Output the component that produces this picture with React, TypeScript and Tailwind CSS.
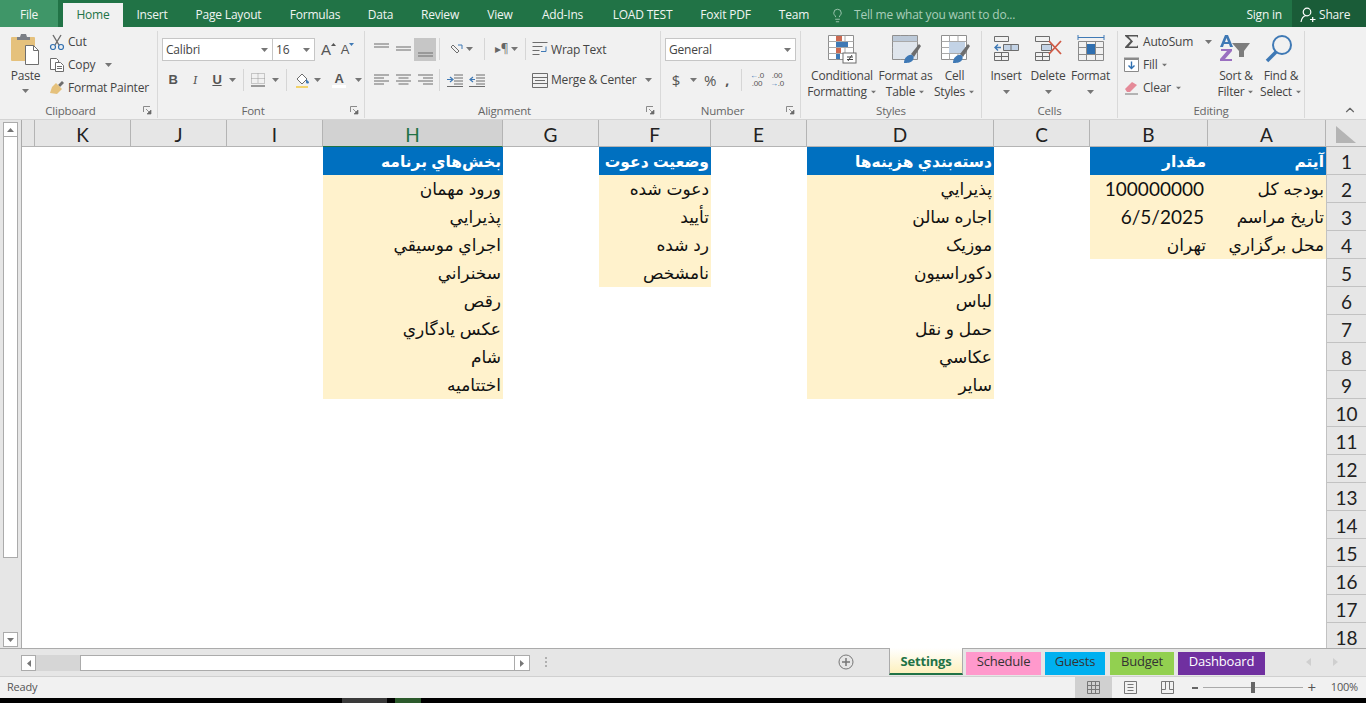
import type { ReactNode } from "react";
import { ChevronUp, Lightbulb } from "lucide-react";

const tabs = [
  { label: "Insert", w: "w-[58px]" },
  { label: "Page Layout", w: "w-[95px]" },
  { label: "Formulas", w: "w-[78px]" },
  { label: "Data", w: "w-[53px]" },
  { label: "Review", w: "w-[66px]" },
  { label: "View", w: "w-[54px]" },
  { label: "Add-Ins", w: "w-[71px]" },
  { label: "LOAD TEST", w: "w-[89px]" },
  { label: "Foxit PDF", w: "w-[77px]" },
  { label: "Team", w: "w-[60px]" },
];

const columns = ["", "K", "J", "I", "H", "G", "F", "E", "D", "C", "B", "A"];

// sheet content, keyed by column letter
const sheet: Record<string, string[]> = {
  H: ["بخش‌هاي برنامه", "ورود مهمان", "پذيرايي", "اجراي موسيقي", "سخنراني", "رقص", "عكس يادگاري", "شام", "اختتاميه"],
  F: ["وضعيت دعوت", "دعوت شده", "تأييد", "رد شده", "نامشخص"],
  D: ["دسته‌بندي هزينه‌ها", "پذيرايي", "اجاره سالن", "موزيک", "دكوراسيون", "لباس", "حمل و نقل", "عكاسي", "ساير"],
  B: ["مقدار", "100000000", "6/5/2025", "تهران"],
  A: ["آيتم", "بودجه كل", "تاريخ مراسم", "محل برگزاري"],
};

const rows = Array.from({ length: 18 }, (_, i) => i);

const Caret = ({ className = "" }: { className?: string }) => (
  <svg width="7" height="4" viewBox="0 0 7 4" className={`shrink-0 ${className}`}>
    <path d="M0 0h7L3.5 4z" fill="#767676" />
  </svg>
);

const Launcher = () => (
  <svg width="9" height="9" viewBox="0 0 9 9" className="shrink-0">
    <path d="M.5 6V.5H7" fill="none" stroke="#8a8a8a" />
    <path d="M3 3l4 4M8 4v4H4z" stroke="#6a6a6a" fill="#6a6a6a" strokeWidth=".7" />
  </svg>
);

const Sep = ({ className = "" }: { className?: string }) => <div className={`w-px h-[22px] bg-[#d6d6d6] ${className}`} />;

// horizontal text lines used by the alignment buttons
const Lines = ({ widths, align = "start" }: { widths: number[]; align?: "start" | "center" | "end" }) => (
  <svg width="15" height={widths.length * 3} viewBox={`0 0 15 ${widths.length * 3}`}>
    {widths.map((w, i) => (
      <rect
        key={i}
        x={align === "start" ? 0 : align === "center" ? (15 - w) / 2 : 15 - w}
        y={i * 3 + 0.5}
        width={w}
        height="1"
        fill="#6d6d6d"
      />
    ))}
  </svg>
);

function Group({ label, width, children, launcher = false }: { label: string; width: string; children: ReactNode; launcher?: boolean }) {
  return (
    <div className={`${width} shrink-0 h-full flex flex-col border-r border-[#d9d9d9]`}>
      <div className="flex-1 min-h-0">{children}</div>
      <div className={`h-[15px] flex items-center text-[11.5px] leading-none text-[#666] relative justify-center ${launcher ? "pr-[16px]" : ""}`}>
        {label}
        {launcher && (
          <span className="absolute right-[5px] top-[3px]">
            <Launcher />
          </span>
        )}
      </div>
    </div>
  );
}

function BigButton({ lines, icon, width, caretAlone = false }: { lines: string[]; icon: ReactNode; width: string; caretAlone?: boolean }) {
  return (
    <div className={`${width} shrink-0 flex flex-col items-center text-[12px] leading-[16px] text-[#444]`}>
      <div className="h-[37px] flex items-start pt-[3px]">{icon}</div>
      {lines.map((l, i) => (
        <div key={i} className="whitespace-nowrap flex items-center gap-[3px]">
          {l}
          {i === lines.length - 1 && !caretAlone && <Caret className="scale-75" />}
        </div>
      ))}
      {caretAlone && (
        <div className="h-[16px] flex items-center">
          <Caret />
        </div>
      )}
    </div>
  );
}

const MiniGrid = ({ children }: { children?: ReactNode }) => (
  <svg width="30" height="30" viewBox="0 0 30 30">
    <path d="M1.500 1.500h25v24h-25z" fill="#fff" stroke="#8f8f8f" />
    <path d="M1.500 7.500h25M1.500 13.500h25M1.500 19.500h25M9.500 1.500v24M18 1.500v24" stroke="#a9a9a9" fill="none" />
    {children}
  </svg>
);

const Brush = () => (
  <g>
    <path d="M20 20l8-10 2 2-7 11z" fill="#6d6d6d" />
    <path d="M13 29c0-5 4-9 8-8 2 .6 2 3 1 5-2 3-6 3-9 3z" fill="#3f79b5" />
  </g>
);

function Cell({ col, row }: { col: string; row: number }) {
  const value = sheet[col]?.[row];
  if (value === undefined) return <div className="h-[28px] bg-white" />;
  const header = row === 0;
  const isNumber = /^[0-9]/.test(value);
  return (
    <div
      dir="rtl"
      className={`h-[28px] flex items-center justify-start whitespace-nowrap overflow-hidden ${
        header ? "bg-[#0070c0] text-white font-bold" : "bg-[#fff2cc] text-[#111]"
      } ${
        isNumber
          ? "font-['Lato',sans-serif] text-[19px] pr-[4px] pt-[1px]"
          : `font-['Liberation_Sans','DejaVu_Sans',sans-serif] pr-[2px] pt-[1px] ${header ? "text-[15.5px]" : "text-[17px]"}`
      }`}
    >
      {isNumber ? <span dir="ltr">{value}</span> : value}
    </div>
  );
}

export default function App() {
  return (
    <div className="w-[1366px] h-screen overflow-hidden flex flex-col bg-black font-['Open_Sans',sans-serif] tracking-[-0.2px]">
      {/* Tab strip */}
      <div className="h-[27px] shrink-0 flex items-stretch bg-[#217346] text-[12px] text-[#f0f5f2]">
        <div className="w-[58px] flex items-center justify-center bg-[#3f9668] pt-[3px]">File</div>
        <div className="w-[5px]" />
        <div className="w-[60px] mt-[3px] flex items-center justify-center bg-[#f1f1f1] text-[#217346]">Home</div>
        <div className="flex items-center pt-[3px]">
          {tabs.map((t) => (
            <div key={t.label} className={`${t.w} text-center whitespace-nowrap`}>
              {t.label}
            </div>
          ))}
        </div>
        <div className="flex items-center ml-[6px] pt-[3px] text-[#a9ceb9]">
          <Lightbulb size={15} strokeWidth={1.4} />
          <span className="ml-[9px]">Tell me what you want to do...</span>
        </div>
        <div className="flex-1" />
        <div className="flex items-center mr-[10px] pt-[3px]">Sign in</div>
        <div className="w-[74px] flex items-center bg-[#1a5c38] pl-[8px] pt-[3px] gap-[3px]">
          <svg width="16" height="16" viewBox="0 0 16 16" fill="none" stroke="#fff" strokeWidth="1.2">
            <circle cx="7" cy="5" r="3.8" />
            <path d="M1 15c.5-3.500 2.500-6 5-6.500M10 12.500h5.500M12.700 10v5" />
          </svg>
          Share
        </div>
      </div>

      {/* Ribbon */}
      <div className="h-[92px] shrink-0 bg-[#f1f1f1] flex pt-[4px] pb-[1px] relative text-[#444]">
        <Group label="Clipboard" width="w-[158px]" launcher>
          <div className="flex h-full">
            <div className="w-[49px] flex flex-col items-center pl-[2px] text-[12px] leading-[16px]">
              <svg width="32" height="33" viewBox="0 0 32 33" className="mt-[2px]">
                <rect x="1" y="4" width="24" height="24" rx="1" fill="#e5c17c" />
                <path d="M7 4h3l1-3h5l1 3h3v3H7z" fill="#7b7f86" />
                <path d="M15.500 12.500h8l5 5v14h-13z" fill="#fff" stroke="#6e6e6e" />
                <path d="M23.500 12.500v5h5" fill="none" stroke="#6e6e6e" />
              </svg>
              <div className="mt-[2px]">Paste</div>
              <Caret className="mt-[5px]" />
            </div>
            <div className="flex flex-col text-[12px] -mt-[1px]">
              <div className="h-[23px] flex items-center gap-[3px]">
                <svg width="16" height="16" viewBox="0 0 16 16" fill="none">
                  <path d="M4 1l6 10M12 1L6 11" stroke="#6d6d6d" strokeWidth="1.4" />
                  <circle cx="4" cy="13" r="2.500" stroke="#2f6fb0" strokeWidth="1.2" />
                  <circle cx="12" cy="13" r="2.500" stroke="#2f6fb0" strokeWidth="1.2" />
                </svg>
                Cut
              </div>
              <div className="h-[23px] flex items-center gap-[3px]">
                <svg width="16" height="16" viewBox="0 0 16 16" fill="#fff" stroke="#6d6d6d">
                  <path d="M1.500 1.500h6l2 2v9h-8z" />
                  <path d="M6.500 5.500h5l3 3v6h-8z" />
                  <path d="M8 9.500h5M8 11.500h5" />
                </svg>
                Copy
                <Caret className="ml-[7px]" />
              </div>
              <div className="h-[23px] flex items-center gap-[3px]">
                <svg width="16" height="16" viewBox="0 0 16 16">
                  <path d="M9 5l4-4 2 2-4 4z" fill="#6d6d6d" />
                  <path d="M7 3l6 6-5 5-7-1 2-6z" fill="#e5c17c" />
                </svg>
                Format Painter
              </div>
            </div>
          </div>
        </Group>

        <Group label="Font" width="w-[207px]" launcher>
          <div className="pl-[4px] pt-[7px]">
            <div className="flex items-center">
              <div className="w-[111px] h-[23px] bg-white border border-[#c6c6c6] flex items-center justify-between px-[3px] text-[12px]">
                Calibri
                <Caret className="mr-[1px]" />
              </div>
              <div className="w-[43px] h-[23px] -ml-px bg-white border border-[#c6c6c6] flex items-center justify-between px-[3px] text-[12px]">
                16
                <Caret className="mr-[1px]" />
              </div>
              <span className="ml-[6px] text-[15px] leading-none font-['Liberation_Sans',sans-serif] text-[#555]">A</span>
              <svg width="5" height="3" viewBox="0 0 5 3" className="mb-[10px]">
                <path d="M2.500 0L5 3H0z" fill="#555" />
              </svg>
              <span className="ml-[5px] text-[13px] leading-none font-['Liberation_Sans',sans-serif] text-[#555]">A</span>
              <svg width="5" height="3" viewBox="0 0 5 3" className="mb-[10px]">
                <path d="M0 0h5L2.500 3z" fill="#3f79b5" />
              </svg>
            </div>
            <div className="flex items-center mt-[8px] h-[22px] text-[13px] font-['Liberation_Sans',sans-serif] text-[#555]">
              <span className="w-[22px] text-center font-bold">B</span>
              <span className="w-[22px] text-center italic font-serif">I</span>
              <span className="w-[22px] text-center font-bold underline">U</span>
              <Caret className="ml-[1px]" />
              <Sep className="ml-[7px]" />
              <svg width="14" height="14" viewBox="0 0 14 14" className="ml-[7px]">
                <path d="M.5.500h13v10H.5zM.5 5.500h13M7 .5v10" fill="none" stroke="#9a9a9a" strokeDasharray="1 1" />
                <path d="M0 13h14" stroke="#7d7d7d" strokeWidth="1.500" />
              </svg>
              <Caret className="ml-[7px]" />
              <Sep className="ml-[7px]" />
              <svg width="16" height="16" viewBox="0 0 16 16" className="ml-[8px]">
                <path d="M2 7l5-5 5 5-5 5z" fill="#fff" stroke="#6d6d6d" />
                <path d="M11 7l3 3c0 2-3 2-3 0z" fill="#3f79b5" />
                <path d="M1 15h12" stroke="#f2d36b" strokeWidth="2" />
              </svg>
              <Caret className="ml-[3px]" />
              <span className="ml-[11px] w-[14px] text-center font-bold leading-none border-b-[3px] border-white">A</span>
              <Caret className="ml-[9px]" />
            </div>
          </div>
        </Group>

        <Group label="Alignment" width="w-[296px]" launcher>
          <div className="pl-[5px] pt-[6px]">
            <div className="flex items-center h-[24px]">
              <div className="w-[22px] flex justify-center -mt-[7px]">
                <Lines widths={[15, 15]} />
              </div>
              <div className="w-[22px] flex justify-center">
                <Lines widths={[15, 15]} />
              </div>
              <div className="w-[22px] h-[23px] bg-[#c6c6c6] flex justify-center items-end pb-[3px]">
                <Lines widths={[15, 15]} />
              </div>
              <Sep className="ml-[3px]" />
              <svg width="15" height="15" viewBox="0 0 15 15" className="ml-[9px]" fill="none" stroke="#6d6d6d">
                <path d="M2 5l6 6M4 3l6 6M2 5l2-2M8 11l2-2" />
                <path d="M9 3l4 0 0 4" stroke="#3f79b5" />
              </svg>
              <Caret className="ml-[2px]" />
              <Sep className="ml-[11px]" />
              <span className="ml-[10px] w-[13px] text-[12px] leading-none text-[#666]">▸¶</span>
              <Caret className="ml-[3px]" />
              <Sep className="ml-[7px]" />
              <div className="ml-[6px] mt-[1px] flex items-center gap-[3px] text-[12px]">
                <svg width="16" height="15" viewBox="0 0 16 15" fill="none" stroke="#6d6d6d">
                  <path d="M.5.500h15M.5 4.500h10M.5 8.500h7M.5 12.500h7" />
                  <path d="M14 4.500v5h-5" stroke="#3f79b5" />
                </svg>
                Wrap Text
              </div>
            </div>
            <div className="flex items-center h-[24px] mt-[7px]">
              <div className="w-[22px] flex justify-center">
                <Lines widths={[15, 10, 15, 10]} />
              </div>
              <div className="w-[22px] flex justify-center">
                <Lines widths={[15, 10, 15, 10]} align="center" />
              </div>
              <div className="w-[22px] flex justify-center">
                <Lines widths={[15, 10, 15, 10]} align="end" />
              </div>
              <Sep className="ml-[3px]" />
              <svg width="16" height="13" viewBox="0 0 16 13" className="ml-[7px]">
                <path d="M7 1h9M7 4h9M7 7h9M7 10h9M0 12.500h16" stroke="#6d6d6d" />
                <path d="M0 5.500h5M3 3l3 2.500L3 8" stroke="#3f79b5" fill="none" strokeWidth="1.200" />
              </svg>
              <svg width="16" height="13" viewBox="0 0 16 13" className="ml-[6px]">
                <path d="M7 1h9M7 4h9M7 7h9M7 10h9M0 12.500h16" stroke="#6d6d6d" />
                <path d="M1 5.500h5M4 3L1 5.500 4 8" stroke="#3f79b5" fill="none" strokeWidth="1.200" />
              </svg>
              <div className="ml-[47px] flex items-center gap-[3px] text-[12px]">
                <svg width="16" height="15" viewBox="0 0 16 15" fill="none" stroke="#6d6d6d">
                  <path d="M.5.500h15v14H.5zM.5 4.500h15M.5 10.500h15M3 7.500h10" />
                </svg>
                Merge &amp; Center
                <Caret className="ml-[6px]" />
              </div>
            </div>
          </div>
        </Group>

        <Group label="Number" width="w-[140px]" launcher>
          <div className="pl-[4px] pt-[7px]">
            <div className="w-[131px] h-[23px] bg-white border border-[#c6c6c6] flex items-center justify-between px-[3px] text-[12px]">
              General
              <Caret className="mr-[1px]" />
            </div>
            <div className="flex items-center mt-[8px] h-[22px] text-[#555]">
              <span className="ml-[6px] w-[10px] text-center text-[15px]">$</span>
              <Caret className="ml-[9px]" />
              <span className="ml-[7px] text-[15px] leading-none">%</span>
              <span className="ml-[9px] text-[14px] font-bold leading-none">,</span>
              <Sep className="ml-[12px]" />
              <span className="ml-[6px] w-[18px] text-[8px] leading-[8px] text-center font-['Liberation_Sans',sans-serif]">
                <span className="text-[#3f79b5]">←</span>.0
                <br />
                .00
              </span>
              <span className="ml-[2px] w-[18px] text-[8px] leading-[8px] text-center font-['Liberation_Sans',sans-serif]">
                .00
                <br />
                <span className="text-[#3f79b5]">→</span>.0
              </span>
            </div>
          </div>
        </Group>

        <Group label="Styles" width="w-[181px]">
          <div className="flex pl-[6px]">
            <BigButton
              width="w-[70px]"
              lines={["Conditional", "Formatting"]}
              icon={
                <svg width="30" height="30" viewBox="0 0 30 30">
                  <path d="M1.500 1.500h25v24h-25z" fill="#fff" stroke="#8f8f8f" />
                  <path d="M1.500 7.500h25M1.500 13.500h25M1.500 19.500h25M9.500 1.500v24M18 1.500v24" stroke="#a9a9a9" fill="none" />
                  <rect x="9" y="2" width="6" height="5" fill="#cc6a52" />
                  <rect x="9" y="8" width="12" height="5" fill="#3f79b5" />
                  <rect x="9" y="14" width="5" height="5" fill="#cc6a52" />
                  <rect x="9" y="20" width="4" height="5" fill="#3f79b5" />
                  <rect x="16" y="19" width="13" height="10" fill="#fff" stroke="#6d6d6d" />
                  <path d="M20 23h6M20 25.500h6M25 21l-4 6" stroke="#444" fill="none" />
                </svg>
              }
            />
            <BigButton
              width="w-[57px]"
              lines={["Format as", "Table"]}
              icon={
                <MiniGrid>
                  <rect x="2" y="2" width="24" height="5" fill="#bcc9d8" />
                  <rect x="2" y="8" width="24" height="17" fill="#dfe5ec" />
                  <Brush />
                </MiniGrid>
              }
            />
            <BigButton
              width="w-[41px]"
              lines={["Cell", "Styles"]}
              icon={
                <MiniGrid>
                  <rect x="9" y="8" width="16" height="11" fill="#c3d3e6" />
                  <Brush />
                </MiniGrid>
              }
            />
          </div>
        </Group>

        <Group label="Cells" width="w-[136px]">
          <div className="flex pl-[3px]">
            <BigButton
              width="w-[42px]"
              lines={["Insert"]}
              caretAlone
              icon={
                <svg width="28" height="28" viewBox="0 0 28 28" fill="none" stroke="#6d6d6d">
                  <path d="M2.500 2.500h14v5h-14zM2.500 18.500h14v8h-14zM9.500 18.500v8M2.500 22.500h14" />
                  <path d="M11.500 10.500h15v6h-15zM19 10.500v6" fill="#c3d3e6" />
                  <path d="M3 13.500h6M6 10.500l-3 3 3 3" stroke="#3f79b5" strokeWidth="1.400" />
                </svg>
              }
            />
            <BigButton
              width="w-[42px]"
              lines={["Delete"]}
              caretAlone
              icon={
                <svg width="30" height="28" viewBox="0 0 30 28" fill="none" stroke="#6d6d6d">
                  <path d="M2.500 2.500h14v5h-14zM2.500 18.500h14v8h-14zM9.500 18.500v8M2.500 22.500h14" />
                  <path d="M8.500 10.500h10v6h-10z" fill="#c3d3e6" />
                  <path d="M16 7l12 13M28 7L16 20" stroke="#d05a45" strokeWidth="1.800" />
                </svg>
              }
            />
            <BigButton
              width="w-[43px]"
              lines={["Format"]}
              caretAlone
              icon={
                <svg width="28" height="30" viewBox="0 0 28 30" fill="none" stroke="#8a8a8a">
                  <path d="M1 3.500h26M1 1v5M27 1v5" stroke="#3f79b5" />
                  <path d="M1.500 7.500h25v19h-25zM1.500 13.500h25M1.500 20.500h25M9.500 7.500v19M18.500 7.500v19" />
                  <rect x="10" y="10" width="8" height="10" fill="#2f6fb0" stroke="none" />
                </svg>
              }
            />
          </div>
        </Group>

        <Group label="Editing" width="w-[187px]">
          <div className="flex h-full pl-[6px]">
            <div className="w-[96px] flex flex-col text-[12px] -mt-[1px]">
              <div className="h-[23px] flex items-center gap-[4px]">
                <svg width="15" height="15" viewBox="0 0 15 15">
                  <path d="M1 1h13v3l-1-1.500H4.500L9 7.500l-4.500 5H13l1-1.500v3H1v-1l5.500-6L1 2z" fill="#555" />
                </svg>
                AutoSum
                <Caret className="ml-[8px]" />
              </div>
              <div className="h-[23px] flex items-center gap-[4px]">
                <svg width="15" height="15" viewBox="0 0 15 15" fill="none">
                  <path d="M.5 2.500h14v12H.5z" fill="#fff" stroke="#8a8a8a" />
                  <path d="M0 .5h15v2H0z" fill="#8a8a8a" />
                  <path d="M7.500 4.500v7M4.500 8.500l3 3 3-3" stroke="#2f6fb0" strokeWidth="1.400" />
                </svg>
                Fill
                <Caret className="scale-75" />
              </div>
              <div className="h-[23px] flex items-center gap-[4px]">
                <svg width="15" height="15" viewBox="0 0 15 15">
                  <path d="M1 9l7-7 5 3-7 7H3z" fill="#e58a98" />
                  <path d="M1 14h13" stroke="#777" />
                </svg>
                Clear
                <Caret className="scale-75" />
              </div>
            </div>
            <BigButton
              width="w-[44px]"
              lines={["Sort &", "Filter"]}
              icon={
                <svg width="32" height="30" viewBox="0 0 32 30" className="-ml-[3px]">
                  <path d="M1 13L6 1h3l5 12h-3l-1-3H5l-1 3zM6 8h3L7.500 4z" fill="#3f79b5" fillRule="evenodd" />
                  <path d="M2 15h11v2l-7 8h7v2H1v-2l7-8H2z" fill="#9a6fc0" />
                  <path d="M13 9h18l-6 8v6h-5v-6z" fill="#7d7d7d" />
                </svg>
              }
            />
            <BigButton
              width="w-[46px]"
              lines={["Find &", "Select"]}
              icon={
                <svg width="28" height="30" viewBox="0 0 28 30" fill="none" className="-ml-[4px]">
                  <circle cx="17" cy="11" r="9" stroke="#3f79b5" strokeWidth="2" />
                  <path d="M11 18L2 27" stroke="#3f79b5" strokeWidth="3.500" />
                </svg>
              }
            />
          </div>
        </Group>
        <div className="flex-1 flex items-end justify-end pr-[9px] pb-[1px]">
          <ChevronUp size={14} strokeWidth={2} className="text-[#666]" />
        </div>
      </div>
      <div className="h-[1px] shrink-0 bg-[#d4d4d4]" />

      {/* Sheet */}
      <div className="h-[528px] shrink-0 flex bg-white overflow-hidden">
        <div className="w-[22px] shrink-0 bg-[#e6e6e6] border-r border-[#ababab] flex flex-col pl-[3px] pr-[3px] pt-[2px] pb-[1px]">
          <div className="h-[15px] bg-white border border-[#ababab] flex items-center justify-center">
            <svg width="7" height="4" viewBox="0 0 7 4">
              <path d="M3.500 0L7 4H0z" fill="#767676" />
            </svg>
          </div>
          <div className="h-[421px] bg-white border border-[#ababab] border-t-0" />
          <div className="flex-1" />
          <div className="h-[15px] bg-white border border-[#ababab] flex items-center justify-center">
            <Caret />
          </div>
        </div>
        <div className="grid grid-cols-[13px_96px_96px_96px_180px_96px_112px_96px_187px_96px_118px_118px_40px] content-start text-[#222] font-['Lato',sans-serif] tracking-normal">
          {columns.map((c) => (
            <div
              key={c}
              className={`h-[27px] flex items-center justify-center pt-[4px] text-[19px] border-r border-b border-[#b4b4b4] ${
                c === "H" ? "bg-[#d2d2d2] text-[#217346] border-b-[#217346]" : "bg-[#e6e6e6]"
              }`}
            >
              {c}
            </div>
          ))}
          <div className="h-[27px] bg-[#e6e6e6] border-b border-[#b4b4b4] flex items-start justify-center pt-[6px]">
            <svg width="20" height="17" viewBox="0 0 20 17">
              <path d="M0 0l20 17H0z" fill="#b4b4b4" />
            </svg>
          </div>
          {rows.map((r) => (
            <div key={r} className="contents">
              {columns.map((c) => (
                <Cell key={c} col={c} row={r} />
              ))}
              <div className="h-[28px] bg-[#e6e6e6] border-l border-b border-[#c2c2c2] flex items-center justify-center pt-[4px] text-[19px]">
                {r + 1}
              </div>
            </div>
          ))}
        </div>
      </div>

      {/* Sheet tabs and horizontal scrollbar */}
      <div className="h-[28px] shrink-0 bg-[#e6e6e6] border-t border-[#ababab] flex items-start text-[13px]">
        <div className="w-[21px]" />
        <div className="w-[509px] h-[16px] mt-[6px] flex bg-[#d6d6d6]">
          <div className="w-[15px] bg-white border border-[#ababab] flex items-center justify-center">
            <svg width="4" height="7" viewBox="0 0 4 7">
              <path d="M4 0v7L0 3.500z" fill="#767676" />
            </svg>
          </div>
          <div className="w-[44px]" />
          <div className="flex-1 bg-white border border-[#ababab]" />
          <div className="w-[15px] bg-white border border-[#ababab] border-l-0 flex items-center justify-center">
            <svg width="4" height="7" viewBox="0 0 4 7">
              <path d="M0 0v7l4-3.500z" fill="#767676" />
            </svg>
          </div>
        </div>
        <div className="ml-[15px] mt-[8px] flex flex-col gap-[2px]">
          <div className="w-[2px] h-[2px] bg-[#b0b0b0]" />
          <div className="w-[2px] h-[2px] bg-[#b0b0b0]" />
          <div className="w-[2px] h-[2px] bg-[#b0b0b0]" />
        </div>
        <svg width="16" height="16" viewBox="0 0 16 16" className="ml-[291px] mt-[5px]" fill="none" stroke="#777">
          <circle cx="8" cy="8" r="7" />
          <path d="M8 4v8M4 8h8" strokeWidth="1.500" />
        </svg>
        <div className="ml-[35px] w-[74px] h-[27px] -mt-px pt-[3px] flex items-center justify-center font-bold text-[#217346] bg-gradient-to-b from-white to-[#fdf0bd] border-x border-b-2 border-x-[#ababab] border-b-[#217346]">
          Settings
        </div>
        <div className="ml-[3px] mt-[3px] w-[75px] h-[23px] pb-[3px] flex items-center justify-center bg-[#ff99cc] text-[#333]">Schedule</div>
        <div className="ml-[4px] mt-[3px] w-[60px] h-[23px] pb-[3px] flex items-center justify-center bg-[#00b0f0] text-[#333]">Guests</div>
        <div className="ml-[5px] mt-[3px] w-[64px] h-[23px] pb-[3px] flex items-center justify-center bg-[#92d050] text-[#333]">Budget</div>
        <div className="ml-[4px] mt-[3px] w-[87px] h-[23px] pb-[3px] flex items-center justify-center bg-[#7030a0] text-white">Dashboard</div>
        <svg width="5" height="8" viewBox="0 0 5 8" className="ml-[41px] mt-[9px]">
          <path d="M5 0v8L0 4z" fill="#cfcfcf" />
        </svg>
        <svg width="5" height="8" viewBox="0 0 5 8" className="ml-[22px] mt-[9px]">
          <path d="M0 0v8l5-4z" fill="#cfcfcf" />
        </svg>
      </div>

      {/* Status bar */}
      <div className="h-[22px] shrink-0 bg-[#f1f1f1] border-t border-[#d0d0d0] flex items-center text-[11px] text-[#555]">
        <span className="ml-[7px]">Ready</span>
        <div className="flex-1" />
        <div className="w-[37px] h-full bg-[#d0d0d0] flex items-center justify-center">
          <svg width="13" height="13" viewBox="0 0 13 13" fill="none" stroke="#777">
            <path d="M.5.500h12v12H.5zM.5 4.500h12M.5 8.500h12M4.500.5v12M8.500.5v12" />
          </svg>
        </div>
        <svg width="13" height="13" viewBox="0 0 13 13" fill="none" stroke="#777" className="ml-[12px]">
          <path d="M.5.500h12v12H.5zM3.500 3.500h6M3.500 6.500h6M3.500 9.500h6" />
        </svg>
        <svg width="13" height="13" viewBox="0 0 13 13" fill="none" stroke="#777" className="ml-[24px]">
          <path d="M.5.500h12v12H.5zM.5 8.500h4v-8M8.500.5v8h4" />
        </svg>
        <div className="ml-[18px] w-[6px] h-[2px] bg-[#666]" />
        <div className="ml-[5px] w-[100px] h-px bg-[#aaa] flex items-center justify-center">
          <div className="w-[4px] h-[11px] bg-[#666]" />
        </div>
        <span className="ml-[4px] text-[15px] leading-none">+</span>
        <span className="ml-[15px] mr-[8px]">100%</span>
      </div>

      {/* Bit of the taskbar at the bottom of the screen */}
      <div className="flex-1 flex bg-black">
        <div className="ml-[342px] w-[45px] bg-[#3a3a3a]" />
        <div className="ml-[8px] w-[26px] bg-[#2c5a2c]" />
      </div>
    </div>
  );
}
